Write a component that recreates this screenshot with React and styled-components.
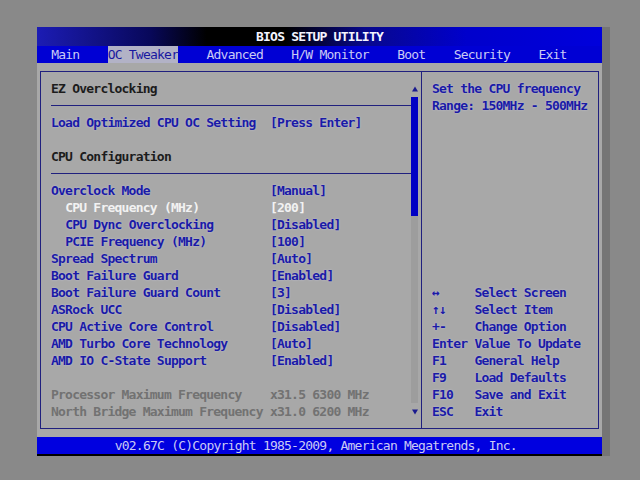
import styled, { createGlobalStyle } from "styled-components";

// the BIOS screen is an 80 column text grid
const CW = 7.0625;
const RH = 17;

const GlobalStyle = createGlobalStyle`
  body {
    margin: 0;
    background: #898989;
  }
`;

const Page = styled.div`
  width: 640px;
  height: 480px;
  box-sizing: border-box;
  padding: 27px 0 0 37px;
  font-family: "DejaVu Sans Mono", "Liberation Mono", monospace;
  font-size: 13px;
  font-weight: bold;
  letter-spacing: -0.77px;
`;

const Screen = styled.div`
  width: 565px;
  display: flex;
  flex-direction: column;
  box-shadow: 8px 0 0 #757575;
`;

const TitleBar = styled.div`
  height: 19px;
  line-height: 20px;
  text-align: center;
  color: #f4f4ff;
  background: linear-gradient(
    90deg,
    #1c1cb4 0%,
    #08085a 20%,
    #000 30%,
    #000 44%,
    #08088c 58%,
    #0000cc 76%,
    #0000dc 100%
  );
`;

const TabBar = styled.div`
  height: ${RH}px;
  display: grid;
  grid-template-columns: repeat(80, ${CW}px);
  background: #0000d4;
  font-weight: normal;
`;

const Tab = styled.div`
  grid-row: 1;
  grid-column: ${(p) => p.$col + 1} / span ${(p) => p.$label.length};
  line-height: ${RH}px;
  white-space: nowrap;
  color: ${(p) => (p.$active ? "#1818a0" : "#cacaf4")};
  background: ${(p) => (p.$active ? "#b2b2c6" : "transparent")};
`;

const Body = styled.div`
  background: #a8a8a8;
  padding: 8px 3px;
`;

const Frame = styled.div`
  display: flex;
  height: 356px;
  border: 1px solid #20207e;
`;

const LeftPane = styled.div`
  width: 380px;
  box-sizing: border-box;
  padding: 8px 3px 8px 10px;
  display: flex;
`;

const List = styled.div`
  flex: 1;
  display: flex;
  flex-direction: column;
`;

const Heading = styled.div`
  height: ${RH}px;
  line-height: ${RH}px;
  color: #1c1c1c;
`;

const Rule = styled.div`
  height: ${RH}px;
  display: flex;
  align-items: center;
  &::before {
    content: "";
    flex: 1;
    height: 1px;
    background: #20207e;
  }
`;

const Blank = styled.div`
  height: ${RH}px;
`;

const itemColor = {
  normal: "#1a1aa6",
  selected: "#f2f2f2",
  info: "#727272",
};

const Item = styled.div`
  height: ${RH}px;
  line-height: ${RH}px;
  display: grid;
  grid-template-columns: ${31 * CW}px 1fr;
  white-space: pre;
  color: ${(p) => itemColor[p.$kind]};
  text-shadow: ${(p) =>
    p.$kind === "normal" ? "0 0 2px rgba(215, 215, 255, 0.6)" : "none"};
`;

const Label = styled.span`
  padding-left: ${(p) => (p.$indent ? 2 * CW : 0)}px;
`;

const Scrollbar = styled.div`
  width: 7px;
  display: flex;
  flex-direction: column;
`;

const Arrow = styled.div`
  height: ${RH}px;
  display: flex;
  align-items: center;
  justify-content: center;
`;

const Thumb = styled.div`
  height: ${7 * RH}px;
  background: #0000c4;
`;

const Track = styled.div`
  flex: 1;
  background: #9d9d9d;
`;

const RightPane = styled.div`
  flex: 1;
  border-left: 1px solid #20207e;
  padding: 8px 0 8px 10px;
  display: flex;
  flex-direction: column;
  justify-content: space-between;
`;

const HelpLine = styled.div`
  height: ${RH}px;
  line-height: ${RH}px;
  white-space: pre;
  color: #1a1aa6;
  text-shadow: 0 0 2px rgba(215, 215, 255, 0.6);
`;

const KeyLine = styled(HelpLine)`
  display: grid;
  grid-template-columns: ${6 * CW}px 1fr;
`;

const Footer = styled.div`
  height: ${RH}px;
  line-height: ${RH}px;
  padding-left: ${11 * CW}px;
  background: #0000e0;
  color: #cacaf4;
  border-bottom: 2px solid #000;
  white-space: pre;
  font-weight: normal;
`;

const tabs = [
  ["Main", 2],
  ["OC Tweaker", 10],
  ["Advanced", 24],
  ["H/W Monitor", 36],
  ["Boot", 51],
  ["Security", 59],
  ["Exit", 71],
];

const settings = [
  { label: "Overclock Mode", value: "[Manual]" },
  { label: "CPU Frequency (MHz)", value: "[200]", indent: true, kind: "selected" },
  { label: "CPU Dync Overclocking", value: "[Disabled]", indent: true },
  { label: "PCIE Frequency (MHz)", value: "[100]", indent: true },
  { label: "Spread Spectrum", value: "[Auto]" },
  { label: "Boot Failure Guard", value: "[Enabled]" },
  { label: "Boot Failure Guard Count", value: "[3]" },
  { label: "ASRock UCC", value: "[Disabled]" },
  { label: "CPU Active Core Control", value: "[Disabled]" },
  { label: "AMD Turbo Core Technology", value: "[Auto]" },
  { label: "AMD IO C-State Support", value: "[Enabled]" },
];

const readouts = [
  { label: "Processor Maximum Frequency", value: "x31.5 6300 MHz" },
  { label: "North Bridge Maximum Frequency", value: "x31.0 6200 MHz" },
];

const keys = [
  ["\u2194", "Select Screen"],
  ["\u2191\u2193", "Select Item"],
  ["+-", "Change Option"],
  ["Enter", "Value To Update"],
  ["F1", "General Help"],
  ["F9", "Load Defaults"],
  ["F10", "Save and Exit"],
  ["ESC", "Exit"],
];

function Triangle({ down }) {
  return (
    <svg width="6" height="6" viewBox="0 0 6 6">
      <polygon
        points={down ? "0,0.5 6,0.5 3,5.5" : "3,0.5 6,5.5 0,5.5"}
        fill="#1a1a8e"
      />
    </svg>
  );
}

function Setting({ label, value, indent, kind = "normal" }) {
  return (
    <Item $kind={kind}>
      <Label $indent={indent}>{label}</Label>
      <span>{value}</span>
    </Item>
  );
}

export default function App() {
  return (
    <>
      <GlobalStyle />
      <Page>
        <Screen>
          <TitleBar>BIOS SETUP UTILITY</TitleBar>
          <TabBar>
            {tabs.map(([label, col]) => (
              <Tab
                key={label}
                $label={label}
                $col={col}
                $active={label === "OC Tweaker"}
              >
                {label}
              </Tab>
            ))}
          </TabBar>
          <Body>
            <Frame>
              <LeftPane>
                <List>
                  <Heading>EZ Overclocking</Heading>
                  <Rule />
                  <Setting
                    label="Load Optimized CPU OC Setting"
                    value="[Press Enter]"
                  />
                  <Blank />
                  <Heading>CPU Configuration</Heading>
                  <Rule />
                  {settings.map((s) => (
                    <Setting key={s.label} {...s} />
                  ))}
                  <Blank />
                  {readouts.map((r) => (
                    <Setting key={r.label} {...r} kind="info" />
                  ))}
                </List>
                <Scrollbar>
                  <Arrow>
                    <Triangle />
                  </Arrow>
                  <Thumb />
                  <Track />
                  <Arrow>
                    <Triangle down />
                  </Arrow>
                </Scrollbar>
              </LeftPane>
              <RightPane>
                <div>
                  <HelpLine>Set the CPU frequency</HelpLine>
                  <HelpLine>Range: 150MHz - 500MHz</HelpLine>
                </div>
                <div>
                  {keys.map(([key, desc]) => (
                    <KeyLine key={key}>
                      <span>{key}</span>
                      <span>{desc}</span>
                    </KeyLine>
                  ))}
                </div>
              </RightPane>
            </Frame>
          </Body>
          <Footer>v02.67C (C)Copyright 1985-2009, American Megatrends, Inc.</Footer>
        </Screen>
      </Page>
    </>
  );
}
